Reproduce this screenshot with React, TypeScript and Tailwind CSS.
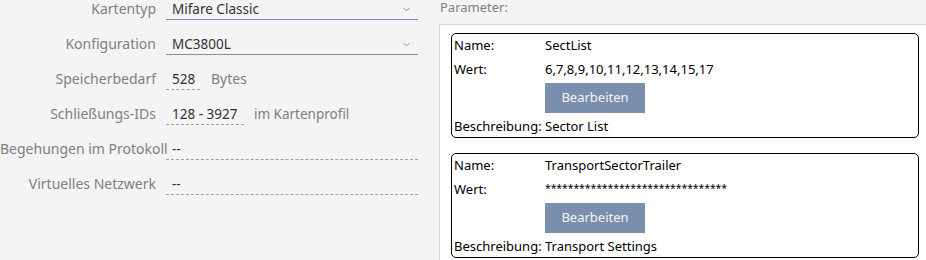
import { ChevronDown } from 'lucide-react';

const font = { fontFamily: '"Segoe UI", "Noto Sans", sans-serif' };

function Row({ label, children }: { label: string; children: React.ReactNode }) {
  return (
    <div className="flex h-[20px] items-start">
      <div className="w-[156px] shrink-0 whitespace-nowrap text-right text-[14px] leading-[18px] text-[#808080]">{label}</div>
      <div className="ml-[10px] flex items-start">{children}</div>
    </div>
  );
}

function Select({ value }: { value: string }) {
  return (
    <div className="flex h-[20px] w-[252px] items-start justify-between border-b border-[#7d8fad] pl-[6px] pr-[6px]">
      <span className="text-[13.5px] leading-[18px] text-[#333]">{value}</span>
      <ChevronDown className="mt-[4px] text-[#666]" size={11} strokeWidth={1.5} />
    </div>
  );
}

function Field({ value, width }: { value: string; width: string }) {
  return (
    <div className={`h-[20px] border-b border-dashed border-[#a0a0a0] pl-[6px] text-[13.5px] leading-[18px] text-[#333] ${width}`}>
      {value}
    </div>
  );
}

function ParamCard({ name, wert, desc, masked }: { name: string; wert: string; desc: string; masked?: boolean }) {
  return (
    <div className="h-[105px] w-[468px] rounded-[5px] border border-black bg-white pl-[2px] text-[13px] text-black">
      <div className="grid grid-cols-[91px_1fr]">
        <div className="flex h-[24px] items-center">Name:</div>
        <div className="flex h-[24px] items-center">{name}</div>
        <div className="flex h-[24px] items-center">Wert:</div>
        {masked ? (
          <div className="h-[24px] pt-[4px] text-[10.5px] leading-[12px] tracking-[-0.1px]">{wert}</div>
        ) : (
          <div className="flex h-[24px] items-center">{wert}</div>
        )}
        <div />
        <div className="mt-[1px]">
          <button className="h-[30px] w-[100px] bg-[#7a8fae] text-[13px] text-[#f4f4f4]">Bearbeiten</button>
        </div>
        <div className="mt-[5px] flex h-[18px] items-center whitespace-nowrap">Beschreibung:</div>
        <div className="mt-[5px] flex h-[18px] items-center">{desc}</div>
      </div>
    </div>
  );
}

export default function App() {
  return (
    <div className="flex h-[260px] w-[926px] overflow-hidden bg-[#f4f4f4]" style={font}>
      <div className="flex w-[439px] shrink-0 flex-col gap-[15px]">
        <Row label="Kartentyp">
          <Select value="Mifare Classic" />
        </Row>
        <Row label="Konfiguration">
          <Select value="MC3800L" />
        </Row>
        <Row label="Speicherbedarf">
          <Field value="528" width="w-[34px]" />
          <span className="ml-[11px] text-[14px] leading-[18px] text-[#808080]">Bytes</span>
        </Row>
        <Row label="Schließungs-IDs">
          <Field value="128 - 3927" width="w-[78px]" />
          <span className="ml-[10px] text-[13.5px] leading-[18px] text-[#808080]">im Kartenprofil</span>
        </Row>
        <Row label="Begehungen im Protokoll">
          <Field value="--" width="w-[252px]" />
        </Row>
        <Row label="Virtuelles Netzwerk">
          <Field value="--" width="w-[252px]" />
        </Row>
      </div>
      <div className="flex flex-1 flex-col">
        <div className="h-[24px] pl-[1px] text-[13px] leading-[14px] text-[#808080]">Parameter:</div>
        <div className="flex flex-1 flex-col gap-[15px] border-l border-t border-[#d4d4d4] bg-white pl-[11px] pt-[8px]">
          <ParamCard name="SectList" wert="6,7,8,9,10,11,12,13,14,15,17" desc="Sector List" />
          <ParamCard name="TransportSectorTrailer" wert="********************************" desc="Transport Settings" masked />
        </div>
      </div>
    </div>
  );
}
